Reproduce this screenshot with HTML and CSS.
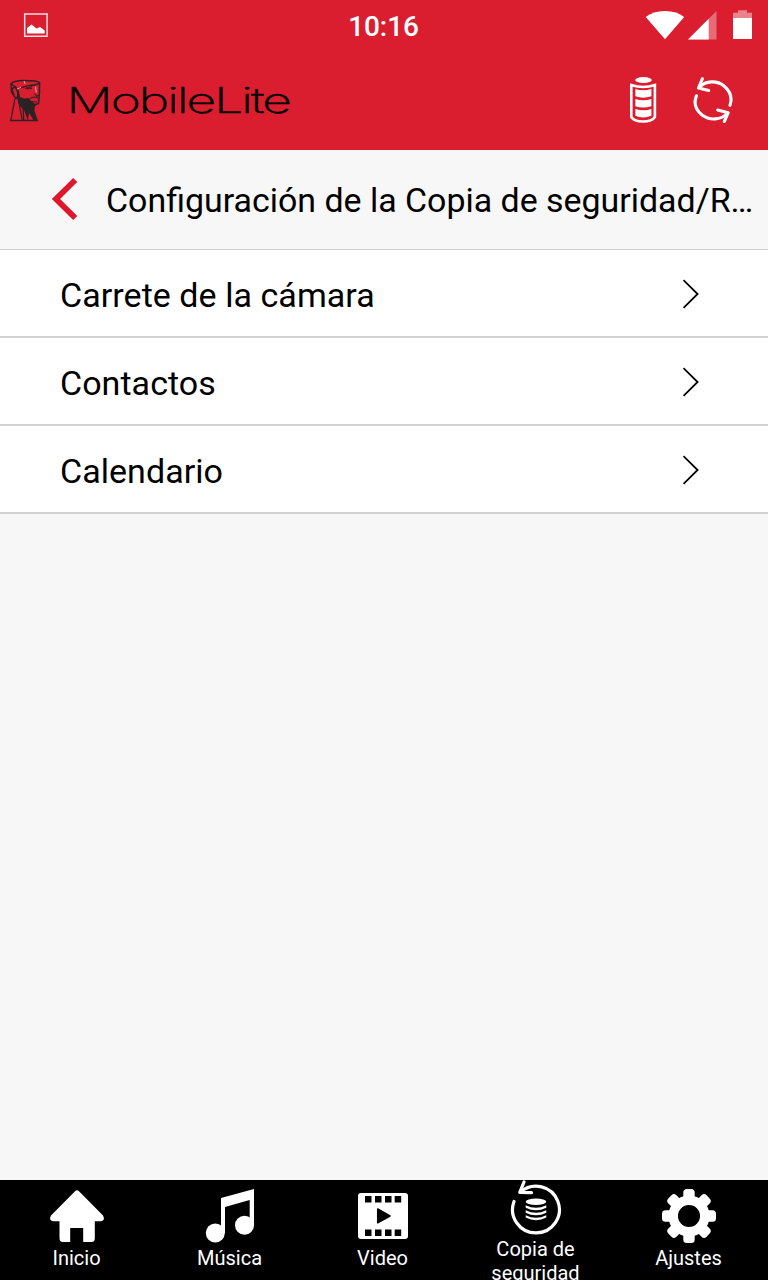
FILE: index.html
```html
<!DOCTYPE html>
<html lang="es">
<head>
<meta charset="utf-8">
<title>MobileLite</title>
<link rel="stylesheet" href="styles.css">
</head>
<body>
<div class="app">
  <header class="header">
    <div class="status">
      <svg class="status-photo" viewBox="23 12 26 26" width="26" height="26"><path d="M24.7 13.9H47.1V36.2H24.7Z" fill="none" stroke="#fbdde0" stroke-width="1.5"/><path d="M27 33.5V28L31.5 24.5L36.5 28.5L40 27L44.7 30.5V33.5Z" fill="#fff"/></svg>
      <time class="clock">10:16</time>
      <svg class="status-system" viewBox="645 8 108 34" width="108" height="34"><path d="M645.7 17Q653 11 665 11T684.2 17L665 39.3Z" fill="#fff"/><path d="M716.5 11V39.5H688Z" fill="#fff" opacity=".35"/><path d="M708.7 18.8V39.5H688Z" fill="#fff"/><path d="M733 12.8H738V10.3H747V12.8H752V18H733Z" fill="#fff" opacity=".45"/><path d="M733 18H752V39H733Z" fill="#fff"/></svg>
    </div>
    <div class="brandbar">
      <svg class="head-logo" viewBox="9 79 33 44" width="33" height="44">
        <path d="M11 83.8Q13 80.5 25 80.5T39.5 82.5Q37 85.5 31 85.2L23 87L18 89Q14 86 11 83.8Z" fill="none" stroke="#2b2224" stroke-width="1.3"/>
        <path d="M11 83.8L11.5 92L15 97.5L17 98.5L18 94Q17 90 15.5 87.5Q12.5 87 12.2 90L14 95" fill="none" stroke="#2b2224" stroke-width="1.4"/>
        <path d="M39.5 82.5V92L38.5 103.5L33 105.5L34 110" fill="none" stroke="#2b2224" stroke-width="1.5"/>
        <path d="M17 89L19 91L20 97L24 98.5L29 98L31 101L36 104.5L34 109L37.8 120.8H34L29 113L28 120.8L24 110L20 106L18 102Z" fill="#2b2224"/>
        <path d="M15 98.5L10.8 120.5M18.3 99L22.3 120.5M23 107L23.8 120" fill="none" stroke="#2b2224" stroke-width="1.3"/>
        <path d="M25 88.5L32 86.5M27 89L32 88.2M30 98.2L34 97L38 98M34.5 93.5L36.5 96.2L39 95M31 101.5L37 102" fill="none" stroke="#2b2224" stroke-width="1.1"/>
        <path d="M10 120.5H38" stroke="#2b2224" stroke-width="1.5"/>
        <path d="M24 81L25.2 84M17 89L21 87.5M35.5 86.5L36.2 92.5" fill="none" stroke="#fba1a8"/>
      </svg>
      <svg class="wordmark" viewBox="66 80 230 40" width="230" height="40"><text class="wordmark-text" x="66.5" y="113" textLength="223.5" lengthAdjust="spacingAndGlyphs">MobileLite</text></svg>
      <svg class="head-battery" viewBox="628 75 30 50" width="30" height="50"><ellipse cx="643.5" cy="80" rx="8.3" ry="3" fill="#fff"/><path d="M631.3 85Q643 89 654.9 85V117Q652 121.5 643 121.5T631.3 117Z" fill="none" stroke="#fff" stroke-width="2.6"/><path d="M635.4 89Q643 91.6 651.4 89V96.3Q643 99.2 635.4 96.3ZM635.4 99Q643 101.6 651.4 99V106.2Q643 109 635.4 106.2ZM635.4 109Q643 111.6 651.4 109V115.7Q643 119.2 635.4 115.7Z" fill="#fff"/></svg>
      <svg class="sync" viewBox="691 74 44 52" width="44" height="52"><g fill="none" stroke="#fff" stroke-width="3.1" stroke-linecap="round" stroke-linejoin="round"><path d="M699.5 87.2C706 80.5 717 80.2 724 86C730.5 91.5 732.5 98 730 105.3M696.4 95.8C693.5 103 696 110 702 115C710 121 721 120 727.5 113.2"/><path d="M702.3 78.8L698.5 88L708.7 90.5M717.7 110L728.2 112.7L724.3 121.5"/></g></svg>
    </div>
  </header>
  <div class="titlebar">
    <svg class="back" viewBox="50 176 29 46" width="29" height="46"><path d="M75.2 180L56 199L75.2 218" fill="none" stroke="#df172d" stroke-width="5.8"/></svg>
    <h1 class="title">Configuración de la Copia de seguridad/R…</h1>
  </div>
  <main class="content">
    <ul class="list">
      <li class="row"><span>Carrete de la cámara</span><svg class="chevron" viewBox="0 0 18 30" width="18" height="30"><path d="M2.2 1.8L15.6 15L2.2 28.2"/></svg></li>
      <li class="row"><span>Contactos</span><svg class="chevron" viewBox="0 0 18 30" width="18" height="30"><path d="M2.2 1.8L15.6 15L2.2 28.2"/></svg></li>
      <li class="row"><span>Calendario</span><svg class="chevron" viewBox="0 0 18 30" width="18" height="30"><path d="M2.2 1.8L15.6 15L2.2 28.2"/></svg></li>
    </ul>
  </main>
  <nav class="tabs">
    <a class="tab"><svg viewBox="47 1186 60 60" width="60" height="60"><path d="M75 1191.3Q77 1189.3 79 1191.3L103 1215.5Q105.5 1220.5 101 1221.2H94.8V1238.5Q94.8 1242 91.5 1242H83.2V1228H70.2V1242H63Q59.5 1242 59.5 1238.5V1221.2H53Q48.5 1220.5 51 1215.5Z" fill="#fff"/></svg><span>Inicio</span></a>
    <a class="tab"><svg viewBox="200 1186 60 60" width="60" height="60"><path d="M221 1198L254 1189V1226H249.7V1200L225 1207V1233H221Z" fill="#fff"/><circle cx="215.3" cy="1233" r="9.5" fill="#fff"/><circle cx="244.5" cy="1225.3" r="9.5" fill="#fff"/></svg><span>Música</span></a>
    <a class="tab"><svg viewBox="353 1186 60 60" width="60" height="60"><rect x="358" y="1193" width="50" height="46" rx="3" fill="#fff"/><path d="M365 1196h6.5v6.5H365ZM375 1196h6.5v6.5H375ZM385 1196h6.5v6.5H385ZM394.7 1196h6.5v6.5H394.7ZM365 1229.5h6.5v6.5H365ZM375 1229.5h6.5v6.5H375ZM385 1229.5h6.5v6.5H385ZM394.7 1229.5h6.5v6.5H394.7Z"/><path d="M377.7 1209L390 1216L377.7 1222.8Z" stroke="#000" stroke-width="1.5" stroke-linejoin="round"/></svg><span>Video</span></a>
    <a class="tab tab-backup"><svg viewBox="506 1180 60 60" width="60" height="60"><g fill="none" stroke="#fff" stroke-width="3.2" stroke-linecap="round" stroke-linejoin="round"><path d="M514 1201.5A23.4 23.4 0 1 0 520.5 1192"/><path d="M524 1182L519.8 1192.3L531.5 1192.6"/></g><ellipse cx="536" cy="1201.8" rx="10.3" ry="3.2" fill="#fff"/><path d="M525.7 1205.2Q536 1210.2 546.3 1205.2V1207.7Q536 1213 525.7 1207.7ZM525.7 1210.2Q536 1215.2 546.3 1210.2V1212.7Q536 1218 525.7 1212.7ZM525.7 1215.2Q536 1220.2 546.3 1215.2V1217.5Q536 1222.8 525.7 1217.5Z" fill="#fff"/></svg><span>Copia de<br>seguridad</span></a>
    <a class="tab"><svg viewBox="659 1186 60 60" width="60" height="60"><circle cx="689" cy="1216" r="15.8" fill="none" stroke="#fff" stroke-width="9.5"/><defs><mask id="hub" maskUnits="userSpaceOnUse" x="658" y="1186" width="62" height="60"><rect x="658" y="1186" width="62" height="60" fill="#fff"/><circle cx="689" cy="1216" r="12" fill="#000"/></mask></defs><g fill="#fff"><rect id="tooth" x="683.3" y="1189" width="11.4" height="54" rx="3.5" mask="url(#hub)"/><use href="#tooth" transform="rotate(45 689 1216)"/><use href="#tooth" transform="rotate(90 689 1216)"/><use href="#tooth" transform="rotate(135 689 1216)"/></g></svg><span>Ajustes</span></a>
  </nav>
</div>
</body>
</html>
```
FILE: styles.css
```css
* { box-sizing: border-box; }
body { margin: 0; font-family: Roboto, sans-serif; color: #000; }
svg { display: block; flex: none; }
.app { width: 768px; height: 1280px; display: flex; flex-direction: column; background: #f7f7f7; overflow: hidden; }
.header { height: 150px; flex: none; background: #da1e30; }
.status { height: 50px; display: grid; grid-template-columns: 1fr auto 1fr; align-items: center; padding: 0 15px 0 23px; }
.status-system { justify-self: end; }
.clock { color: #fff; font-size: 28px; font-weight: 500; line-height: 33px; padding-top: 3px; margin-right: 9px; letter-spacing: -0.1px; }
.brandbar { height: 100px; display: flex; align-items: center; padding: 0 33px 0 9px; }
.head-logo { margin-top: 2px; }
.wordmark { margin-left: 24px; }
.wordmark-text { font-family: Inter, sans-serif; font-size: 35px; font-weight: 200; letter-spacing: -1.3px; fill: #000; stroke: #000; stroke-width: 0.5px; }
.head-battery { margin-left: auto; }
.sync { margin-left: 33px; }
.titlebar { height: 100px; flex: none; display: flex; align-items: center; padding-left: 50px; border-bottom: 1px solid #cfcfcf; }
.back { margin-top: -1px; }
.title { margin: 2px 0 0 27px; font-size: 33.92px; font-weight: 400; white-space: nowrap; }
.content { flex: 1; min-height: 0; }
.list { margin: 0; padding: 0; list-style: none; background: #fff; }
.row { height: 88px; display: flex; align-items: center; justify-content: space-between; padding: 3px 68px 0 60px; border-bottom: 2px solid #d1d1d1; font-size: 34px; letter-spacing: 0.05px; }
.chevron { margin-top: -1px; }
.chevron path { fill: none; stroke: #000; stroke-width: 1.8; stroke-linecap: square; }
.tabs { height: 100px; flex: none; display: grid; grid-template-columns: repeat(5, 153px); background: #000; overflow: hidden; }
.tab { display: flex; flex-direction: column; align-items: center; padding-top: 6px; color: #fff; font-size: 20px; line-height: 24px; text-align: center; }
.tab-backup { padding-top: 0; }
.tab-backup span { margin-top: -3px; }
```
